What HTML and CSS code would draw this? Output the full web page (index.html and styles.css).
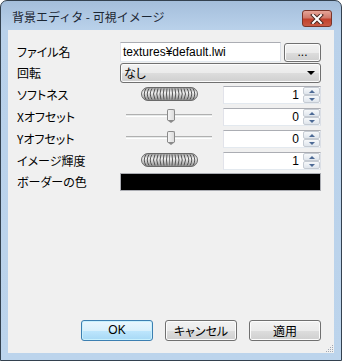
FILE: index.html
```html
<!DOCTYPE html>
<html lang="ja">
<head>
  <meta charset="UTF-8">
  <meta name="viewport" content="width=device-width, initial-scale=1.0">
  <title>背景エディタ - 可視イメージ</title>
  <link rel="stylesheet" href="styles.css">
</head>
<body>

<div class="window">
  <div class="titlebar">
    <span class="title">背景エディタ - 可視イメージ</span>
    <button class="close">
      <svg width="14" height="10" viewBox="0 0 14 10">
        <path d="M3 1 L11 9 M11 1 L3 9" stroke="#4a2a24" stroke-width="4" stroke-linecap="square"/>
        <path d="M3 1 L11 9 M11 1 L3 9" stroke="#fff" stroke-width="2" stroke-linecap="square"/>
      </svg>
    </button>
  </div>

  <div class="client">
    <div class="form">
      <div class="row row-file">
        <span class="label">ファイル名</span>
        <div class="textbox">textures¥default.lwi</div>
        <button class="btn browse">...</button>
      </div>
      <div class="row row-combo">
        <span class="label">回転</span>
        <div class="combo">
          <span>なし</span>
          <span class="combo-arrow"></span>
        </div>
      </div>
      <div class="row row-spin">
        <span class="label">ソフトネス</span>
        <div class="ctrl">
          <svg class="knob" width="57" height="14" viewBox="0 0 57 14">
            <use href="#knob-shape"/>
          </svg>
        </div>
        <div class="spin"><span class="spin-value">1</span><div class="spin-btns"><span class="up"></span><span class="down"></span></div></div>
      </div>
      <div class="row row-spin">
        <span class="label">Xオフセット</span>
        <div class="ctrl"><div class="track"><span class="thumb"></span></div></div>
        <div class="spin"><span class="spin-value">0</span><div class="spin-btns"><span class="up"></span><span class="down"></span></div></div>
      </div>
      <div class="row row-spin">
        <span class="label">Yオフセット</span>
        <div class="ctrl"><div class="track"><span class="thumb"></span></div></div>
        <div class="spin"><span class="spin-value">0</span><div class="spin-btns"><span class="up"></span><span class="down"></span></div></div>
      </div>
      <div class="row row-spin">
        <span class="label">イメージ輝度</span>
        <div class="ctrl">
          <svg class="knob" width="57" height="14" viewBox="0 0 57 14">
            <use href="#knob-shape"/>
          </svg>
        </div>
        <div class="spin"><span class="spin-value">1</span><div class="spin-btns"><span class="up"></span><span class="down"></span></div></div>
      </div>
      <div class="row row-color">
        <span class="label">ボーダーの色</span>
        <div class="swatch"></div>
      </div>
    </div>

    <div class="actions">
      <button class="btn default">OK</button>
      <button class="btn">キャンセル</button>
      <button class="btn">適用</button>
    </div>

    <svg class="grip" width="10" height="10" viewBox="0 0 10 10">
      <g fill="#a0a8b4">
        <rect x="8" y="2" width="1" height="1"/>
        <rect x="6" y="4" width="1" height="1"/><rect x="8" y="4" width="1" height="1"/>
        <rect x="4" y="6" width="1" height="1"/><rect x="6" y="6" width="1" height="1"/><rect x="8" y="6" width="1" height="1"/>
        <rect x="2" y="8" width="1" height="1"/><rect x="4" y="8" width="1" height="1"/><rect x="6" y="8" width="1" height="1"/><rect x="8" y="8" width="1" height="1"/>
      </g>
    </svg>
  </div>
</div>

<svg width="0" height="0" class="defs">
  <defs>
    <linearGradient id="knob-fill" x1="0" y1="0" x2="0" y2="1">
      <stop offset="0" stop-color="#9a9a9a"/>
      <stop offset="0.4" stop-color="#f2f2f2"/>
      <stop offset="1" stop-color="#8a8a8a"/>
    </linearGradient>
    <g id="knob-shape">
      <rect x="0.5" y="0.5" width="56" height="13" rx="6.5" fill="url(#knob-fill)" stroke="#6a6a6a"/>
      <g fill="none" stroke="#555" stroke-width="1">
        <path d="M5 1.5 Q1.5 7 5 12.5"/>
        <path d="M8 1.5 Q4.5 7 8 12.5"/>
        <path d="M11 1.5 Q7.5 7 11 12.5"/>
        <path d="M14 1.5 Q11 7 14 12.5"/>
        <path d="M17 1.5 Q14.5 7 17 12.5"/>
        <path d="M20 1.5 Q18 7 20 12.5"/>
        <path d="M23 1.5 Q21.5 7 23 12.5"/>
        <path d="M26 1.5 Q25 7 26 12.5"/>
        <path d="M31 1.5 Q32 7 31 12.5"/>
        <path d="M34 1.5 Q35.5 7 34 12.5"/>
        <path d="M37 1.5 Q39 7 37 12.5"/>
        <path d="M40 1.5 Q42.5 7 40 12.5"/>
        <path d="M43 1.5 Q46 7 43 12.5"/>
        <path d="M46 1.5 Q49.5 7 46 12.5"/>
        <path d="M49 1.5 Q52.5 7 49 12.5"/>
        <path d="M52 1.5 Q55.5 7 52 12.5"/>
      </g>
      <path d="M28.5 1.5 V12.5" stroke="#777"/>
    </g>
  </defs>
</svg>

</body>
</html>
```

FILE: styles.css
```css
html, body {
  margin: 0;
  padding: 0;
}
body {
  width: 342px;
  height: 361px;
  font-family: "Noto Sans CJK JP", "Liberation Sans", sans-serif;
  font-size: 12px;
  font-feature-settings: "palt";
  color: #000;
  background: #fff;
}
.defs {
  position: absolute;
}
.window {
  box-sizing: border-box;
  width: 342px;
  height: 361px;
  border: 1px solid #33414f;
  border-radius: 7px 7px 0 0;
  background: linear-gradient(#a4bedb, #b9d1ea 28px, #bcd4ec);
  display: flex;
  flex-direction: column;
}
.titlebar {
  height: 29px;
  display: flex;
  align-items: flex-start;
  justify-content: space-between;
}
.title {
  margin: 9px 0 0 11px;
  font-size: 12px;
  line-height: 14px;
  color: #1b2633;
  font-feature-settings: normal;
}
.close {
  margin: 9px 9px 0 0;
  width: 30px;
  height: 17px;
  padding: 0;
  border: 1px solid #7a3529;
  border-radius: 3px;
  background: linear-gradient(#e6a598, #d07a6b 45%, #c2412c 55%, #c95b45);
  display: flex;
  align-items: center;
  justify-content: center;
}
.client {
  flex: 1;
  margin: 0 7px 7px;
  background: #f0f0f0;
  display: flex;
  flex-direction: column;
  position: relative;
}
.form {
  padding: 12px 13px 0 9px;
}
.row {
  display: flex;
  align-items: center;
}
.label {
  width: 103px;
  flex: none;
  line-height: 14px;
}
.row-file {
  height: 20px;
}
.row-combo {
  height: 20px;
  margin-top: 1px;
}
.row-spin {
  height: 18px;
  margin-top: 4px;
}
.row-combo + .row-spin {
  margin-top: 3px;
}
.row-color {
  height: 18px;
  margin-top: 3px;
}
.textbox {
  box-sizing: border-box;
  width: 161px;
  height: 20px;
  border: 1px solid #abadb3;
  border-color: #abadb3 #dbdfe6 #e3e9ef #e2e3ea;
  background: #fff;
  padding: 0 2px;
  font-family: "Liberation Sans", "Noto Sans CJK JP", sans-serif;
  line-height: 18px;
}
.btn {
  box-sizing: border-box;
  height: 21px;
  width: 72px;
  padding: 0;
  border: 1px solid #707070;
  border-radius: 3px;
  background: linear-gradient(#f2f2f2, #ebebeb 50%, #dddddd 51%, #cfcfcf);
  box-shadow: inset 0 0 0 1px #fcfcfc;
  font-family: "Noto Sans CJK JP", "Liberation Sans", sans-serif;
  font-size: 12px;
  font-feature-settings: "palt";
  line-height: 17px;
  color: #000;
}
.btn.default {
  border-color: #3c7fb1;
  background: linear-gradient(#eaf6fd, #d9f0fc 50%, #bee6fd 51%, #a7d9f5);
  box-shadow: inset 0 0 0 1px #c9f0fd;
  font-family: "Liberation Sans", sans-serif;
}
.browse {
  width: 37px;
  height: 19px;
  margin-left: 3px;
  line-height: 12px;
  font-family: "Liberation Sans", sans-serif;
}
.combo {
  box-sizing: border-box;
  width: 201px;
  height: 20px;
  border: 1px solid #707070;
  border-radius: 3px;
  background: linear-gradient(#f2f2f2, #ebebeb 50%, #dddddd 51%, #cfcfcf);
  box-shadow: inset 0 0 0 1px #fcfcfc;
  display: flex;
  align-items: center;
  justify-content: space-between;
  padding: 0 5px 0 3px;
  line-height: 14px;
}
.combo-arrow {
  width: 0;
  height: 0;
  border-left: 4px solid transparent;
  border-right: 4px solid transparent;
  border-top: 4px solid #000;
}
.ctrl {
  width: 103px;
  height: 18px;
  flex: none;
  position: relative;
}
.knob {
  position: absolute;
  left: 21px;
  top: 1px;
}
.track {
  position: absolute;
  left: 6px;
  top: 6px;
  width: 86px;
  height: 1px;
  border-top: 1px solid #b0b0b0;
  border-bottom: 1px solid #fff;
  background: #e7eaea;
}
.thumb {
  position: absolute;
  left: 41px;
  top: -6px;
  width: 6px;
  height: 10px;
  border: 1px solid #8a8a8a;
  border-bottom: none;
  border-radius: 2px 2px 0 0;
  background: linear-gradient(90deg, #f4f4f4, #dcdcdc);
}
.thumb::after {
  content: "";
  position: absolute;
  left: -1px;
  top: 10px;
  width: 0;
  height: 0;
  border-left: 4px solid transparent;
  border-right: 4px solid transparent;
  border-top: 3px solid #8a8a8a;
}
.spin {
  box-sizing: border-box;
  width: 98px;
  height: 18px;
  border: 1px solid #abadb3;
  border-color: #abadb3 #dbdfe6 #e3e9ef #e2e3ea;
  background: #fff;
  display: flex;
  align-items: center;
  justify-content: flex-end;
}
.spin-value {
  font-family: "Liberation Sans", sans-serif;
  line-height: 14px;
  padding-right: 4px;
}
.spin-btns {
  width: 17px;
  height: 16px;
  display: flex;
  flex-direction: column;
}
.spin-btns span {
  flex: 1;
  box-sizing: border-box;
  border: 1px solid #c5cbd3;
  border-radius: 2px;
  background: linear-gradient(#f6f8fa, #dfe5ec);
  display: flex;
  align-items: center;
  justify-content: center;
}
.spin-btns .up::after {
  content: "";
  border-left: 3px solid transparent;
  border-right: 3px solid transparent;
  border-bottom: 3px solid #4d6a95;
}
.spin-btns .down::after {
  content: "";
  border-left: 3px solid transparent;
  border-right: 3px solid transparent;
  border-top: 3px solid #4d6a95;
}
.swatch {
  box-sizing: border-box;
  width: 201px;
  height: 18px;
  border: 1px solid #abadb3;
  background: #000;
}
.actions {
  margin-top: auto;
  display: flex;
  justify-content: flex-end;
  gap: 12px;
  padding: 0 13px 12px;
}
.grip {
  position: absolute;
  right: 0;
  bottom: 0;
}
```
